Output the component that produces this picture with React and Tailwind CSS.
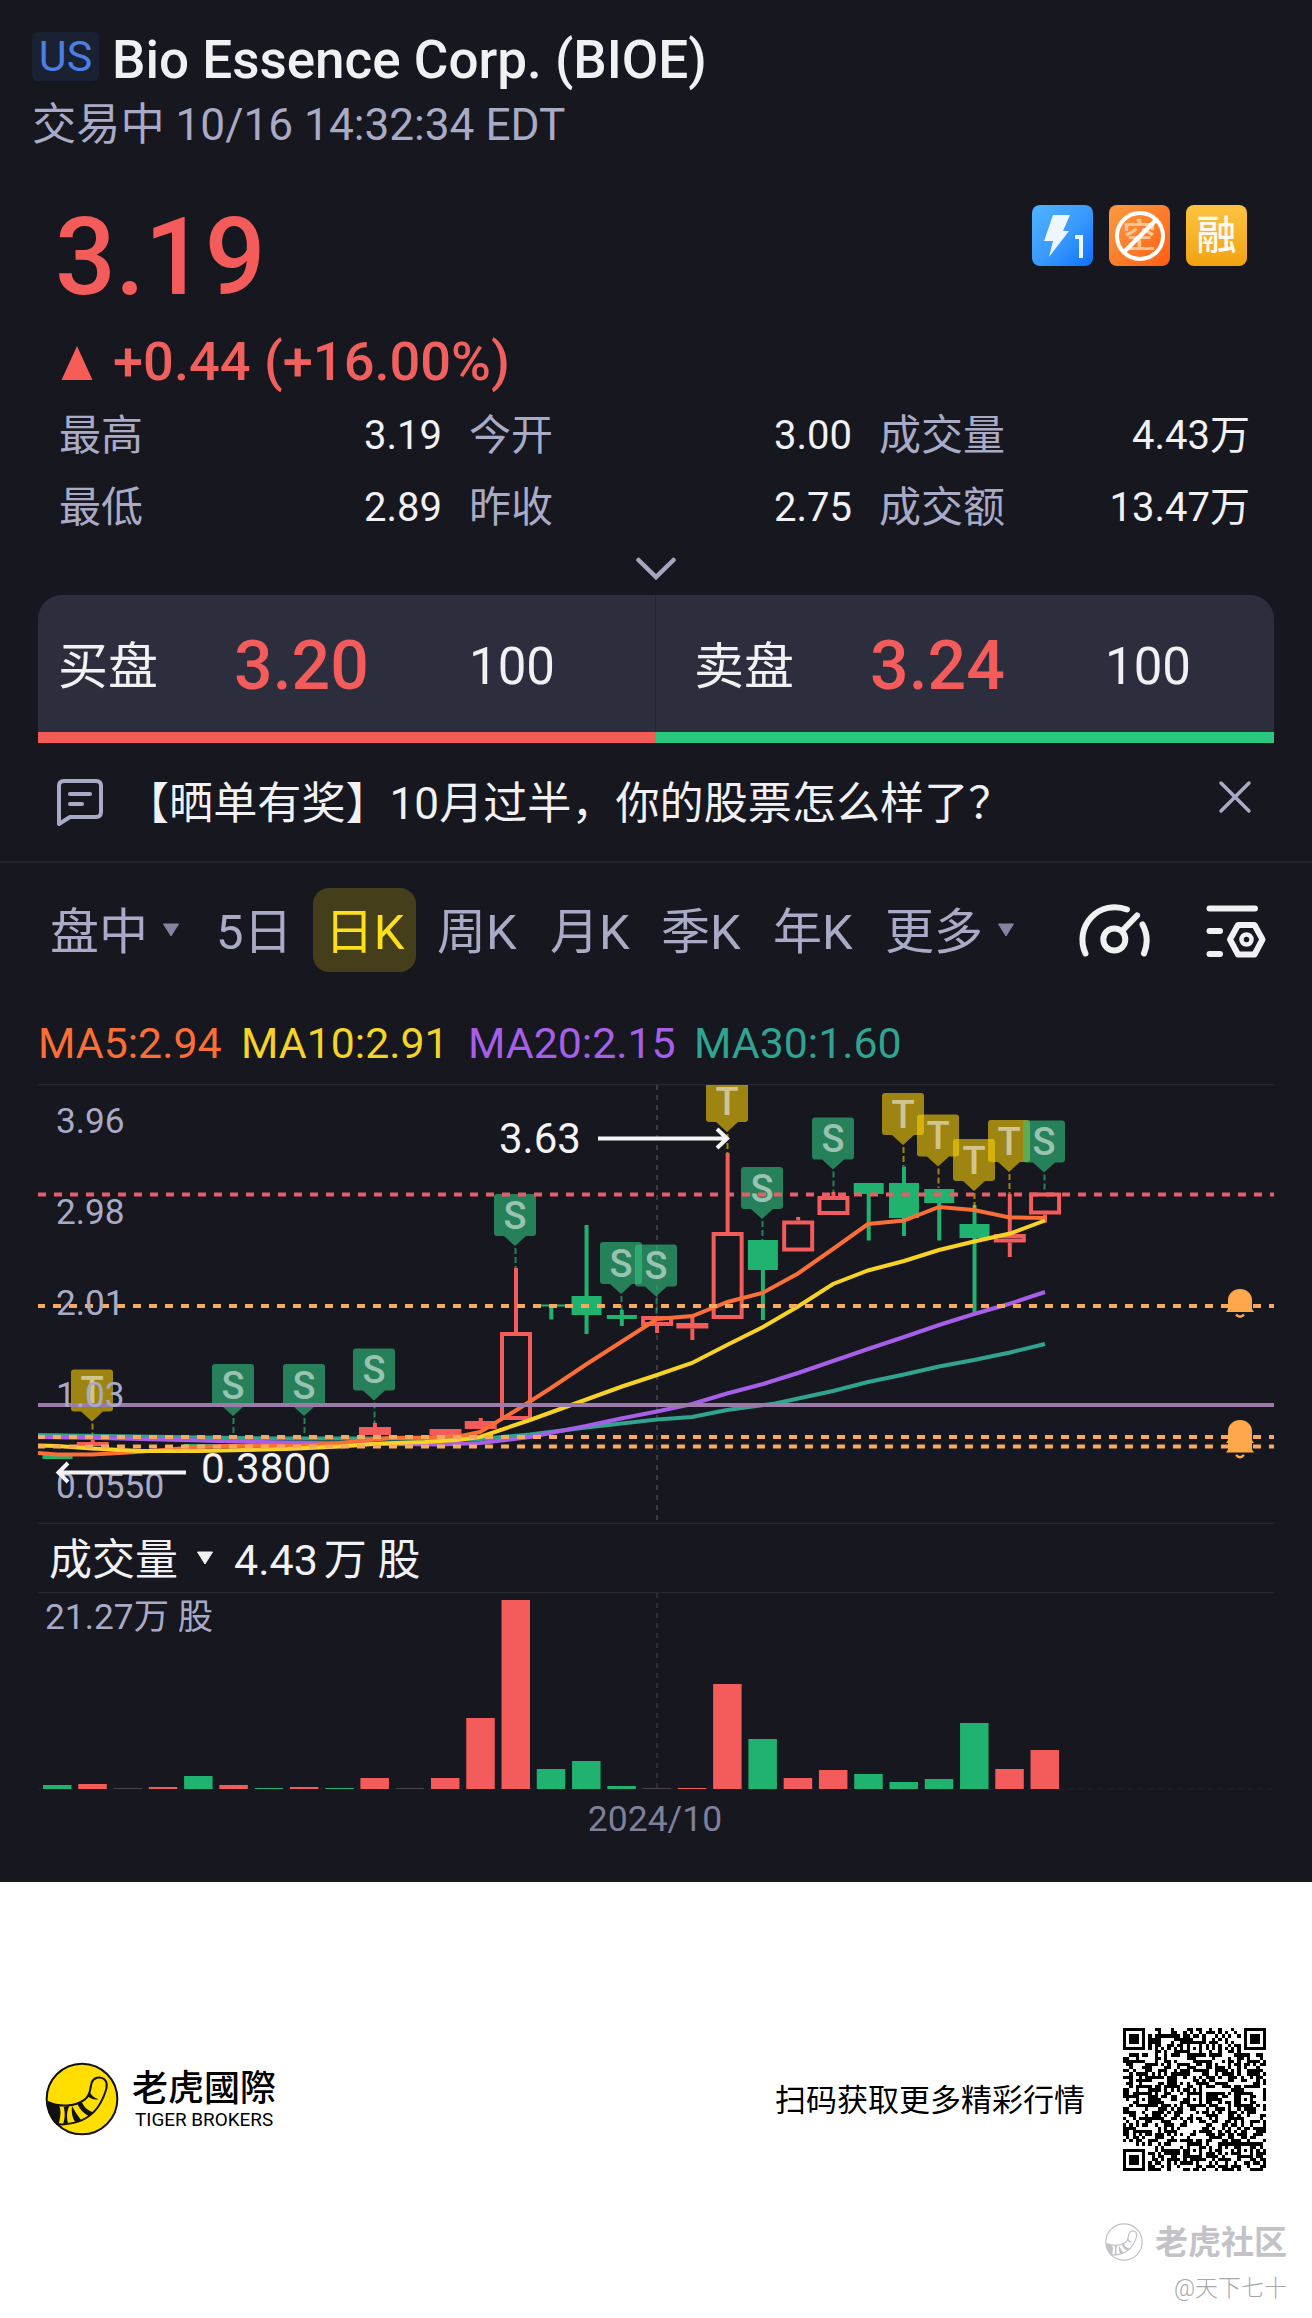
import { useId } from "react"

const stats = [
  [
    { label: "最高", value: "3.19", width: "w-[410px] pr-[27px]" },
    { label: "今开", value: "3.00", width: "w-[410px] pr-[27px]" },
    { label: "成交量", value: "4.43万", width: "w-[371px]" },
  ],
  [
    { label: "最低", value: "2.89", width: "w-[410px] pr-[27px]" },
    { label: "昨收", value: "2.75", width: "w-[410px] pr-[27px]" },
    { label: "成交额", value: "13.47万", width: "w-[371px]" },
  ],
]

const tabs = [
  { label: "盘中", width: "w-[166px]", caret: true },
  { label: "5日", width: "w-[97px]" },
  { label: "日K", active: true },
  { label: "周K", width: "w-[113px]" },
  { label: "月K", width: "w-[111px]" },
  { label: "季K", width: "w-[112px]" },
  { label: "年K", width: "w-[112px]" },
  { label: "更多", width: "w-[193px]", caret: true },
]

const averages = [
  { label: "MA5:2.94", className: "w-[203px] text-[#fb6f37]" },
  { label: "MA10:2.91", className: "w-[227px] text-[#f5d327]" },
  { label: "MA20:2.15", className: "w-[226px] text-[#a65fe6]" },
  { label: "MA30:1.60", className: "text-[#30a391]" },
]

const RED = "#f45b5b"
const GREEN = "#20b26f"

const candleX = (i) => 57 + i * 35.27

// i: slot, top/bottom: body, high/low: wick
const candles = [
  { i: 0, up: false, top: 1455, bottom: 1459, high: 1455, low: 1459 },
  { i: 1, up: true, top: 1442, bottom: 1446, high: 1440, low: 1446 },
  { i: 4, up: false, top: 1444, bottom: 1448, high: 1444, low: 1448 },
  { i: 5, up: true, top: 1444, bottom: 1447, high: 1444, low: 1447 },
  { i: 7, up: true, top: 1443, bottom: 1446, high: 1443, low: 1446 },
  { i: 9, up: true, top: 1427, bottom: 1435, high: 1423, low: 1435 },
  { i: 11, up: true, top: 1429, bottom: 1435, high: 1429, low: 1435 },
  { i: 12, up: true, top: 1421, bottom: 1429, high: 1418, low: 1429 },
  { i: 13, up: true, top: 1332, bottom: 1420, high: 1268, low: 1420, hollow: true },
  { i: 14, up: false, top: 1304.5, bottom: 1306.5, high: 1305, low: 1319.5 },
  { i: 15, up: false, top: 1296, bottom: 1315, high: 1225, low: 1334 },
  { i: 16, up: false, top: 1315, bottom: 1319, high: 1310, low: 1326 },
  { i: 17, up: true, top: 1316, bottom: 1326, high: 1316, low: 1333, hollow: true },
  { i: 18, up: true, top: 1323, bottom: 1328.5, high: 1316, low: 1340 },
  { i: 19, up: true, top: 1232, bottom: 1319, high: 1153, low: 1319, hollow: true },
  { i: 20, up: false, top: 1240, bottom: 1270, high: 1240, low: 1320 },
  { i: 21, up: true, top: 1220.5, bottom: 1251.5, high: 1217, low: 1251.5, hollow: true },
  { i: 22, up: true, top: 1196, bottom: 1215, high: 1192, low: 1215, hollow: true },
  { i: 23, up: false, top: 1183, bottom: 1194, high: 1183, low: 1240.5 },
  { i: 24, up: false, top: 1183, bottom: 1218, high: 1166.5, low: 1236 },
  { i: 25, up: false, top: 1189, bottom: 1203, high: 1189, low: 1240.5 },
  { i: 26, up: false, top: 1224, bottom: 1238, high: 1205, low: 1312.5 },
  { i: 27, up: true, top: 1234, bottom: 1242.5, high: 1194, low: 1257, hollow: true },
  { i: 28, up: true, top: 1192.5, bottom: 1214.5, high: 1192.5, low: 1222.5, hollow: true },
]

const pins = [
  { type: "T", x: 92, y: 1369.5, to: 1440 },
  { type: "S", x: 233, y: 1364, to: 1436 },
  { type: "S", x: 304, y: 1364, to: 1436 },
  { type: "S", x: 374, y: 1348.5, to: 1423 },
  { type: "S", x: 515, y: 1194, to: 1268 },
  { type: "S", x: 621, y: 1242, to: 1314 },
  { type: "S", x: 656, y: 1244.5, to: 1316 },
  { type: "T", x: 727, y: 1080, to: 1153 },
  { type: "S", x: 762, y: 1167, to: 1240 },
  { type: "S", x: 833, y: 1117.5, to: 1192 },
  { type: "T", x: 903, y: 1093, to: 1166 },
  { type: "T", x: 938, y: 1114.5, to: 1188 },
  { type: "T", x: 974, y: 1139, to: 1212 },
  { type: "T", x: 1009, y: 1120, to: 1194 },
  { type: "S", x: 1044, y: 1120.5, to: 1192 },
]

const maLines = [
  {
    color: "#30a391",
    points: "38,1435 100,1436 275,1438.5 440,1438.5 480,1439 530,1434.5 586,1427.5 657,1419.5 692,1417 727,1410 775,1403.5 833,1391 868,1382 904,1374.5 939,1366.5 974,1360 1010,1352.5 1045,1344",
  },
  {
    color: "#a65fe6",
    points: "38,1437 100,1438 200,1440.5 280,1442.5 350,1443.5 440,1444.5 480,1443 530,1437 586,1426 621,1418.5 657,1411.5 692,1404 727,1393.5 763,1384 798,1373 833,1361 868,1349 904,1337 939,1325 974,1314 1009,1304 1045,1292",
  },
  {
    color: "#fb6f37",
    points: "38,1453 57,1454.5 92,1454.5 128,1452.5 163,1450 198,1447 233,1446 304,1445.5 340,1443 390,1438 425,1437.5 461,1436 480,1432 515,1411 551,1388 586,1364.5 657,1319 692.5,1316 727.5,1302 762.5,1293 798,1273.5 833,1249 868,1224 904,1220.5 939,1207 974,1210 1009.5,1217.5 1045,1218",
  },
  {
    color: "#f8d224",
    points: "38,1445.5 57,1446 92,1448.5 140,1451 200,1451 287,1449 340,1446.5 380,1443.5 425,1442 458,1440 480,1437 530,1420 563,1408 622,1386.5 657,1375 692,1363 727,1345 763,1327 798,1306.5 833,1284 868,1270.5 904,1261 939,1250 974,1241.5 1010,1233.5 1045,1220.5",
  },
]

const axisLabels = [
  { text: "3.96", y: 1133 },
  { text: "2.98", y: 1224 },
  { text: "2.01", y: 1315 },
  { text: "1.03", y: 1407 },
  { text: "0.0550", y: 1498 },
]

// bar height and direction per slot
const volumes = [
  [4, "g"], [5, "r"], [1, "n"], [2, "r"], [13, "g"], [4, "r"], [1, "g"], [2, "r"],
  [1, "g"], [11, "r"], [1, "n"], [11, "r"], [71, "r"], [189, "r"], [20, "g"], [28, "g"],
  [3, "g"], [1, "n"], [1, "r"], [105, "r"], [50, "g"], [11, "r"], [19, "r"], [15, "g"],
  [7, "g"], [10, "g"], [66, "g"], [20, "r"], [39, "r"],
]
const volumeColors = { r: RED, g: GREEN, n: "#4a4048" }

function Pin({ type, x, y, to }) {
  const fill = type === "S" ? "#32c681" : "#facf08"
  return (
    <g>
      <path
        d={`M${x - 18} ${y}h36a3 3 0 0 1 3 3v36a3 3 0 0 1 -3 3h-7l-11 10l-11 -10h-7a3 3 0 0 1 -3 -3v-36a3 3 0 0 1 3 -3z`}
        fill={fill}
        fillOpacity="0.6"
      />
      <line x1={x + 0.5} x2={x + 0.5} y1={y + 54} y2={to} stroke={fill} strokeOpacity="0.6" strokeWidth="2" strokeDasharray="6 3" />
      <text x={x} y={y + 34.5} textAnchor="middle" fontSize="38" fontWeight="500" fill="#fff" fillOpacity="0.55">
        {type}
      </text>
    </g>
  )
}

function Candle({ i, up, top, bottom, high, low, hollow }) {
  const x = candleX(i) + 0.5
  const color = up ? RED : GREEN
  const half = up ? 16 : 15
  return (
    <g>
      {high < top && <rect x={x - 2} y={high} width="4" height={top - high} fill={color} />}
      {low > bottom && <rect x={x - 2} y={bottom} width="4" height={low - bottom} fill={color} />}
      {hollow ? (
        <rect x={x - half + 2} y={top + 2} width={half * 2 - 4} height={bottom - top - 4} fill="none" stroke={color} strokeWidth="4" />
      ) : (
        <rect x={x - half} y={top} width={half * 2} height={bottom - top} fill={color} />
      )}
    </g>
  )
}

function ChartBell({ y }) {
  return (
    <g transform={`translate(1240 ${y})`}>
      <path d="M-12 20V11A12 11 0 0 1 12 11V20L14 23H-14Z" fill="#ffa84b" />
      <path d="M-4 25.5Q0 30 4 25.5" fill="none" stroke="#ffa84b" strokeWidth="2.5" />
    </g>
  )
}

function PriceChart() {
  const clip = useId()
  return (
    <svg className="block" width="1236" height="440" viewBox="38 1084 1236 440" fontFamily='Roboto, "Noto Sans CJK SC", sans-serif'>
      <clipPath id={clip}>
        <rect x="38" y="1085" width="1236" height="438" />
      </clipPath>
      <path d="M38 1084.5H1274M38 1523.5H1274" stroke="#26272f" strokeWidth="1.5" />
      <path d="M657 1085V1520" stroke="#3a3a41" strokeWidth="2" strokeDasharray="5 5" />
      <g clipPath={`url(#${clip})`}>
        {candles.map((c) => (
          <Candle key={c.i} {...c} />
        ))}
        {pins.map((p) => (
          <Pin key={p.x} {...p} />
        ))}
        {maLines.map((l) => (
          <polyline key={l.color} points={l.points} fill="none" stroke={l.color} strokeWidth="4" />
        ))}
        <path d="M38 1194.5H1274" stroke="#e75f66" strokeWidth="4" strokeDasharray="8 8" />
        <path d="M37 1306H1274M37 1437H1274M37 1446.5H1274" stroke="#f7a95f" strokeWidth="4" strokeDasharray="8 8" />
        <path d="M38 1405H1274" stroke="#9a7ba9" strokeWidth="4" />
        <ChartBell y={1289} />
        <ChartBell y={1420} />
        <ChartBell y={1429.5} />
      </g>
      {axisLabels.map((l) => (
        <text key={l.text} x="56" y={l.y} fontSize="35.2" fill="#a9aac6">
          {l.text}
        </text>
      ))}
      <g fill="none" stroke="#f4f4f6" strokeWidth="4">
        <path d="M598 1138.5H727M717 1129L727 1138.5L717 1148" />
        <path d="M186 1472.5H59M68 1463L58.5 1472.5L68 1482" />
      </g>
      <text x="499" y="1153" fontSize="42" fill="#f4f4f6">3.63</text>
      <text x="201" y="1483" fontSize="42.3" fill="#f4f4f6">0.3800</text>
    </svg>
  )
}

function VolumeChart() {
  return (
    <svg className="block" width="1236" height="198" viewBox="38 1592 1236 198" fontFamily='Roboto, "Noto Sans CJK SC", sans-serif'>
      <path d="M38 1592.5H1274" stroke="#26272f" strokeWidth="1.5" />
      <path d="M657 1593V1788" stroke="#2c2c34" strokeWidth="2" strokeDasharray="5 5" />
      <path d="M38 1789H1274" stroke="#22232b" strokeWidth="1" strokeDasharray="5 5" />
      {volumes.map(([h, dir], i) => (
        <rect key={i} x={candleX(i) - 14} y={1789 - h} width="28.5" height={h} fill={volumeColors[dir]} />
      ))}
      <text x="45" y="1628.5" fontSize="35.3" fill="#a9aac6">21.27万 股</text>
    </svg>
  )
}

function Caret({ className }) {
  return (
    <svg className={className} width="18" height="14" viewBox="0 0 18 14">
      <path d="M1.5 1H16.5L9 13Z" fill="currentColor" stroke="currentColor" strokeLinejoin="round" />
    </svg>
  )
}

function GaugeIcon() {
  return (
    <svg width="72" height="56" viewBox="1078 902 72 56" fill="none" stroke="#f1f1f3" strokeWidth="6" strokeLinecap="round">
      <path d="M1085.5 953.5A32.500 32.500 0 0 1 1127 909.5" />
      <path d="M1142.5 924.5A34 34 0 0 1 1144 953.5" />
      <circle cx="1114.3" cy="939.5" r="11" />
      <path d="M1122.5 930.5L1137 915.5" />
    </svg>
  )
}

function ChartSettingsIcon() {
  return (
    <svg className="ml-14" width="62" height="58" viewBox="1206 902 62 58" fill="none" stroke="#f1f1f3" strokeWidth="6" strokeLinecap="round" strokeLinejoin="round">
      <path d="M1209.5 909.5H1255M1209.5 932H1220M1209.5 955H1220" />
      <path d="M1238 926H1254.5L1262.5 940.5L1254.5 955.5H1238L1230 940.5Z" />
      <circle cx="1246.5" cy="940.5" r="5" strokeWidth="4.5" />
    </svg>
  )
}

function TigerMark({ size, color, fill, line = 6 }) {
  return (
    <svg width={size} height={size} viewBox="76 96 222 222" fill="none">
      <circle cx="187" cy="207" r="106" fill={fill} stroke={color} strokeWidth={line} />
      <path
        d="M84 216C120 232 165 231 196 208C214 194 210 178 216 158C222 142 240 138 253 147C264 156 263 170 257 186C243 228 215 262 175 275C152 282 128 286 110 281"
        stroke={color}
        strokeWidth={line}
      />
      <path d="M83 216L117 226C126 240 122 260 118 279L106 280C94 268 84 248 83 216Z" fill={color} />
      <path d="M132 230L149 228C141 243 141 260 145 280L130 283C137 262 136 246 132 230Z" fill={color} />
      <path d="M157 228C163 240 172 254 184 270L167 277C157 262 155 246 157 228Z" fill={color} />
      <path d="M173 221L186 214C190 228 202 240 219 247L207 258C192 250 180 238 173 221Z" fill={color} />
      <path d="M204 198L210 184C214 196 222 202 236 208C222 210 212 206 204 198Z" fill={color} />
    </svg>
  )
}

// 45x45 code with finder, alignment and timing marks
function buildQr() {
  const n = 45
  let seed = 20241016
  const rows = []
  for (let y = 0; y < n; y++) {
    const row = []
    for (let x = 0; x < n; x++) {
      seed = (seed * 1103515245 + 12345) % 2147483648
      row.push((seed >> 12) % 100 < 51)
    }
    rows.push(row)
  }
  for (let i = 8; i < n - 8; i++) {
    rows[6][i] = i % 2 === 0
    rows[i][6] = i % 2 === 0
  }
  const square = (cx, cy, r, light) => {
    for (let y = -r; y <= r; y++) {
      for (let x = -r; x <= r; x++) {
        if (rows[cy + y]?.[cx + x] === undefined) continue
        rows[cy + y][cx + x] = !light.includes(Math.max(Math.abs(x), Math.abs(y)))
      }
    }
  }
  square(3, 3, 4, [2, 4])
  square(n - 4, 3, 4, [2, 4])
  square(3, n - 4, 4, [2, 4])
  for (const [x, y] of [[22, 6], [6, 22], [22, 22], [38, 22], [22, 38], [38, 38]]) {
    square(x, y, 2, [1])
  }
  return rows.flatMap((row, y) => row.map((on, x) => (on ? `M${x} ${y}h1v1h-1z` : ""))).join("")
}

function QrCode() {
  return (
    <svg width="143" height="143" viewBox="0 0 45 45" shapeRendering="crispEdges">
      <path d={buildQr()} fill="#000" />
    </svg>
  )
}

function QuoteSide({ label, price, size, row, bar }) {
  return (
    <div className="flex w-[618px] flex-col">
      <div className={`flex h-[137px] items-center pt-1 leading-none ${row}`}>
        <span className="w-[176px] pt-0.5 text-[50px] text-[#f1f1f4]">{label}</span>
        <span className="w-[235px] text-[68px] font-medium text-[#f45b5b]">{price}</span>
        <span className="pt-0.5 text-[51px] text-[#f1f1f4]">{size}</span>
      </div>
      <div className={`h-[11px] ${bar}`} />
    </div>
  )
}

export default function App() {
  return (
    <div className="min-h-[2318px] w-[1312px] bg-white font-[Roboto,'Noto_Sans_CJK_SC',sans-serif]">
      <div className="h-[1882px] bg-[#16171f]">
        <header className="pt-8 pl-8 leading-none">
          <div className="flex h-14 items-center">
            <span className="flex h-[49px] w-[67px] items-center justify-center self-start rounded-md bg-[#1a2133] text-[43px] text-[#4b7fe4]">
              US
            </span>
            <h1 className="pt-px pl-[13px] text-[53px] font-medium whitespace-nowrap text-[#f1f1f3]">Bio Essence Corp. (BIOE)</h1>
          </div>
          <div className="flex h-[74px] items-center pt-px text-[44.2px] text-[#a9aac6]">交易中 10/16 14:32:34 EDT</div>
        </header>

        <section className="pt-[41px] pl-[59px]">
          <div className="flex h-[108px] items-start justify-between pr-[65px]">
            <span className="-ml-1 pt-px text-[107px] leading-none font-medium tracking-[-0.5px] text-[#f45b5b]">3.19</span>
            <div className="flex gap-4 pt-0.5">
              <span className="h-[61px] w-[61px] rounded-lg bg-linear-to-br from-[#4fb4fb] via-[#3b9bff] to-[#0a70fb]">
                <svg width="61" height="61" viewBox="0 0 61 61">
                  <path d="M21 10H38L31 26H37L17 52L21 36H12Z" fill="#eef7ff" />
                  <path d="M43 32H49V53" fill="none" stroke="#eef7ff" strokeWidth="4" />
                </svg>
              </span>
              <span className="relative flex h-[61px] w-[61px] items-center justify-center rounded-lg bg-linear-to-br from-[#fb9a3f] to-[#fd5c10] text-[34px] leading-none font-medium text-[#fec592]">
                空
                <svg className="absolute inset-0" width="61" height="61" viewBox="0 0 61 61" fill="none" stroke="#fff">
                  <circle cx="31" cy="31" r="23" strokeWidth="4" />
                  <path d="M15 47L47 15" strokeWidth="4.5" />
                </svg>
              </span>
              <span className="flex h-[61px] w-[61px] items-center justify-center rounded-lg bg-linear-to-b from-[#fbc33f] to-[#f2a30a] text-[40px] leading-none font-medium text-[#fffaf0]">
                融
              </span>
            </div>
          </div>
          <div className="mt-[14px] flex h-[74px] items-center">
            <svg className="ml-[2px]" width="32" height="35" viewBox="0 0 32 35">
              <path d="M16 1L31.5 35H0.500Z" fill="#f85c59" />
            </svg>
            <span className="pl-5 text-[54.2px] leading-none font-medium text-[#f0605f]">+0.44 (+16.00%)</span>
          </div>
          {stats.map((row, i) => (
            <div key={i} className="flex h-[72px] items-center pt-px leading-none">
              {row.map((s) => (
                <div key={s.label} className={`flex shrink-0 items-center justify-between ${s.width}`}>
                  <span className="text-[42px] text-[#a9aac6]">{s.label}</span>
                  <span className="text-[40px] text-[#f1f1f4]">{s.value}</span>
                </div>
              ))}
            </div>
          ))}
        </section>

        <div className="flex h-[52px] justify-center pt-3.5">
          <svg width="42" height="24" viewBox="0 0 42 24" fill="none" stroke="#a5a6c2" strokeWidth="4.5" strokeLinecap="round">
            <path d="M3.5 3L21 20L38.5 3" />
          </svg>
        </div>

        <section className="mx-[38px] flex h-[148px] overflow-hidden rounded-t-3xl bg-[#2d2e3d]">
          <QuoteSide label="买盘" price="3.20" size="100" row="border-r border-[#242530] pl-5" bar="bg-[#f45b57]" />
          <QuoteSide label="卖盘" price="3.24" size="100" row="pl-[38px]" bar="bg-[#2ac77f]" />
        </section>

        <section className="flex h-[120px] items-center border-b-2 border-[#22232b] pl-14">
          <svg width="48" height="48" viewBox="0 0 48 48" fill="none" stroke="#a9aac6" strokeWidth="4" strokeLinecap="round" strokeLinejoin="round">
            <path d="M8 3H40Q45 3 45 8V34Q45 39 40 39H14L3 46V8Q3 3 8 3Z" />
            <path d="M14 16H34M14 26H26" />
          </svg>
          <span className="pt-1 pl-[21px] text-[44.1px] leading-none whitespace-nowrap text-[#f1f1f4]">【晒单有奖】10月过半，你的股票怎么样了？</span>
          <svg className="mr-[60px] mb-2.5 ml-auto" width="34" height="34" viewBox="0 0 34 34" stroke="#a9aac6" strokeWidth="3.5" strokeLinecap="round">
            <path d="M3 3L31 31M31 3L3 31" />
          </svg>
        </section>

        <nav className="flex h-[134px] items-center pl-[50px] text-[49px] leading-none text-[#a9aac6]">
          {tabs.map((t) =>
            t.active ? (
              <span key={t.label} className="mr-[21px] flex h-[84px] w-[103px] shrink-0 items-center justify-center rounded-2xl bg-[#443e1a] pt-1 text-[#fddf1a]">
                {t.label}
              </span>
            ) : (
              <span key={t.label} className={`flex shrink-0 items-center pt-1 ${t.width}`}>
                {t.label}
                {t.caret && <Caret className="mb-1 ml-[14px] text-[#8384a0]" />}
              </span>
            )
          )}
          <GaugeIcon />
          <ChartSettingsIcon />
        </nav>

        <div className="flex h-[87px] items-center pt-[5px] pl-[38px] text-[42.8px] leading-none">
          {averages.map((a) => (
            <span key={a.label} className={`shrink-0 ${a.className}`}>
              {a.label}
            </span>
          ))}
        </div>

        <div className="px-[38px]">
          <PriceChart />
          <div className="flex h-[68px] items-center pt-1 pl-[11px] text-[43px] leading-none text-[#f1f1f4]">
            成交量
            <Caret className="mb-1 ml-[17px] w-5" />
            <span className="pl-[19px]">4.43</span>
            <span className="pl-1.5">万 股</span>
          </div>
          <VolumeChart />
          <div className="flex h-[60px] items-center justify-center pr-0.5 text-[35.5px] leading-none text-[#7f809b]">2024/10</div>
        </div>
      </div>

      <footer className="flex h-[436px] flex-col text-black">
        <div className="mt-[145px] flex h-[144px] items-center pl-[45px]">
          <TigerMark size={74} color="#111" fill="#ffde00" />
          <div className="pt-[3px] pl-[13px] leading-none">
            <div className="text-[36px] font-medium">老虎國際</div>
            <div className="pt-1 pl-[3px] text-[18.9px]">TIGER BROKERS</div>
          </div>
          <span className="ml-auto pt-0.5 pr-[38px] text-[31px] leading-none">扫码获取更多精彩行情</span>
          <div className="mr-[46px]">
            <QrCode />
          </div>
        </div>
        <div className="mt-[52px] mr-[25px] flex items-center justify-end text-[33px] leading-none font-bold text-[#c3c3c7]">
          <TigerMark size={38} color="#c3c3c7" fill="none" line={7} />
          <span className="pl-3">老虎社区</span>
        </div>
        <div className="mt-4 mr-[25px] text-right text-[23px] leading-none font-light text-[#a8a8ac]">@天下七十</div>
      </footer>
    </div>
  )
}
